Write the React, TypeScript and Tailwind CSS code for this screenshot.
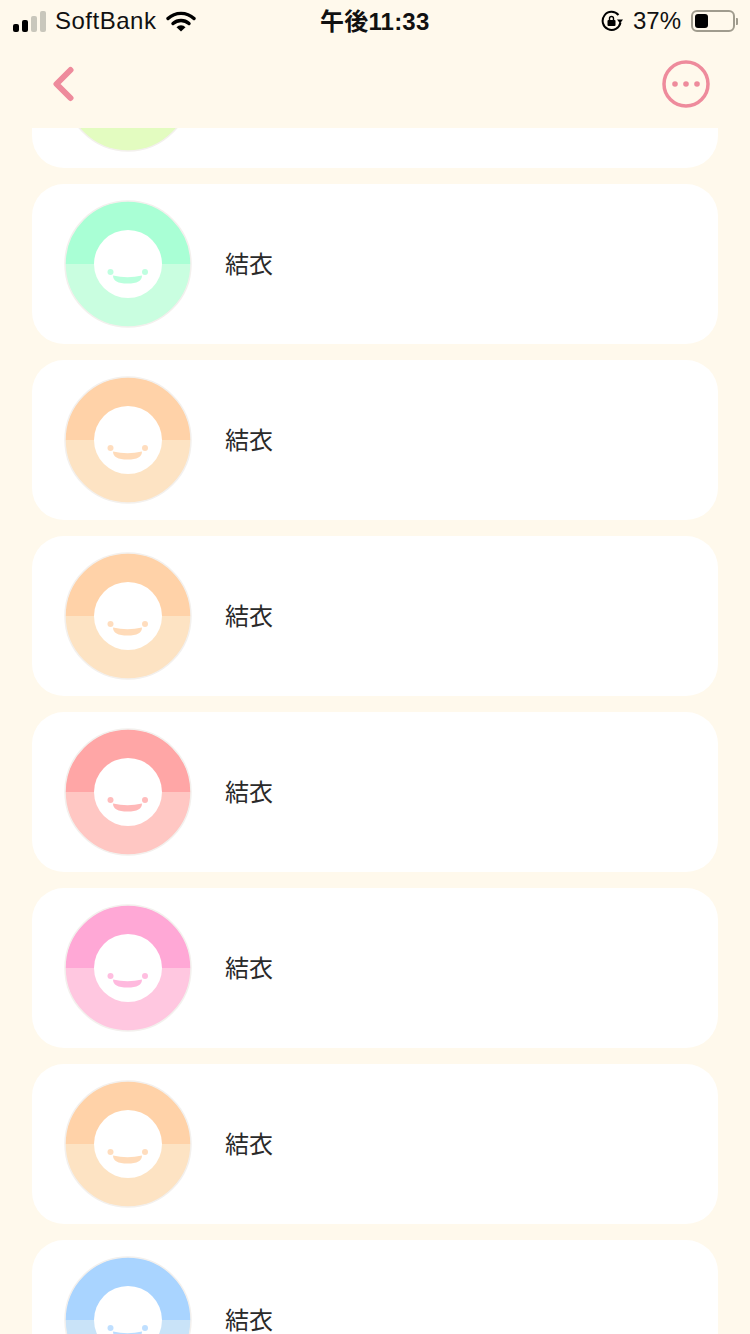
import React from 'react'

const font = { fontFamily: '"Liberation Sans", "Noto Sans CJK JP", sans-serif' }

const rows = [
  { top: '#e3fcc0', bottom: '#e3fcc0', name: '' },
  { top: '#a9ffd5', bottom: '#c9fee0', name: '結衣' },
  { top: '#ffd2a8', bottom: '#fde3c3', name: '結衣' },
  { top: '#ffd2a8', bottom: '#fde3c3', name: '結衣' },
  { top: '#ffa6a6', bottom: '#ffc7c3', name: '結衣' },
  { top: '#ffa8d6', bottom: '#ffc7e0', name: '結衣' },
  { top: '#ffd2a8', bottom: '#fde3c3', name: '結衣' },
  { top: '#a9d4ff', bottom: '#c9e3f8', name: '結衣' },
]

const Avatar = ({ top, bottom }: { top: string; bottom: string }) => (
  <svg width="128" height="128" viewBox="0 0 128 128" className="shrink-0">
    <path d="M1 64a63 63 0 0 1 126 0z" fill={top} />
    <path d="M1 64a63 63 0 0 0 126 0z" fill={bottom} />
    <circle cx="64" cy="64" r="63" fill="none" stroke="#f3f0ed" strokeWidth="1.500" />
    <circle cx="64" cy="64" r="34" fill="#fff" />
    <circle cx="46.500" cy="72" r="3" fill={top} fillOpacity="0.75" />
    <circle cx="81" cy="72" r="3" fill={top} fillOpacity="0.75" />
    <path d="M49 75.500Q63.500 79 78 75.500Q78 83.500 63.500 83.500Q49 83.500 49 75.500z" fill={top} fillOpacity="0.8" />
  </svg>
)

export default function App() {
  return (
    <div className="w-[750px] h-[1334px] bg-[#fff9ec] flex flex-col overflow-hidden text-black" style={font}>
      {/* Status bar */}
      <div className="h-10 shrink-0 relative flex items-center justify-between pl-[13px] pr-[12px] pt-[2px]">
        <div className="flex items-center">
          <div className="flex items-end gap-[3px] h-[21px]">
            <span className="w-[6px] h-[8px] rounded-[2px] bg-black" />
            <span className="w-[6px] h-[12px] rounded-[2px] bg-black" />
            <span className="w-[6px] h-[16px] rounded-[2px] bg-[#c9c7bc]" />
            <span className="w-[6px] h-[21px] rounded-[2px] bg-[#c9c7bc]" />
          </div>
          <span className="ml-[9px] text-[24px] leading-none tracking-[0.5px] text-[#111]">SoftBank</span>
          <svg width="30" height="22" viewBox="0 0 30 22" className="ml-[10px]">
            <path d="M2 8.500a19 19 0 0 1 26 0" fill="none" stroke="#000" strokeWidth="3.400" strokeLinecap="round" />
            <path d="M7 13.500a12 12 0 0 1 16 0" fill="none" stroke="#000" strokeWidth="3.400" strokeLinecap="round" />
            <path d="M10.500 17.200a6 6 0 0 1 9 0L15 21.500z" fill="#000" />
          </svg>
        </div>
        <span className="absolute left-[320px] top-[7px] text-[24px] leading-[30px] font-bold tracking-[0.2px] text-[#111]">午後11:33</span>
        <div className="flex items-center">
          <svg width="22" height="22" viewBox="0 0 22 22">
            <path d="M17.500 5A9 9 0 1 0 19.500 12.500" fill="none" stroke="#000" strokeWidth="2" />
            <path d="M16 9.500h6L19 13.500z" fill="#000" />
            <rect x="6.500" y="10" width="8" height="6" rx="1" fill="#000" />
            <path d="M8.500 10V8.500a2 2 0 0 1 4 0V10" fill="none" stroke="#000" strokeWidth="1.400" />
          </svg>
          <span className="ml-[10px] text-[24px] leading-none text-[#111]">37%</span>
          <div className="ml-[10px] w-[44px] h-[22px] rounded-[6px] border-2 border-[#a09c8e] p-[2px]">
            <div className="w-[13px] h-full rounded-[3px] bg-black" />
          </div>
          <span className="ml-[1px] w-[2px] h-[7px] rounded-r-[1px] bg-[#a09c8e]" />
        </div>
      </div>

      {/* Nav bar */}
      <div className="h-[88px] shrink-0 flex items-center justify-between pl-[53px] pr-[40px]">
        <svg width="24" height="38" viewBox="0 0 24 38">
          <path d="M17.500 5L3.500 19l14 14" fill="none" stroke="#ee8b9c" strokeWidth="6" strokeLinecap="round" strokeLinejoin="round" />
        </svg>
        <svg width="48" height="48" viewBox="0 0 48 48">
          <circle cx="24" cy="24" r="22" fill="none" stroke="#ee8b9c" strokeWidth="3.500" />
          <circle cx="13" cy="24" r="2.800" fill="#ee8b9c" />
          <circle cx="24" cy="24" r="2.800" fill="#ee8b9c" />
          <circle cx="35" cy="24" r="2.800" fill="#ee8b9c" />
        </svg>
      </div>

      {/* List, scrolled part way */}
      <div className="flex-1 overflow-hidden">
        <div className="-mt-[120px] mx-8 flex flex-col gap-4">
          {rows.map((row, i) => (
            <div key={i} className="h-40 shrink-0 bg-white rounded-[32px] flex items-center pl-8">
              <Avatar top={row.top} bottom={row.bottom} />
              {row.name && <span className="ml-[33px] mt-[2px] text-[24px] leading-none text-[#2a2a2a]">{row.name}</span>}
            </div>
          ))}
        </div>
      </div>
    </div>
  )
}
